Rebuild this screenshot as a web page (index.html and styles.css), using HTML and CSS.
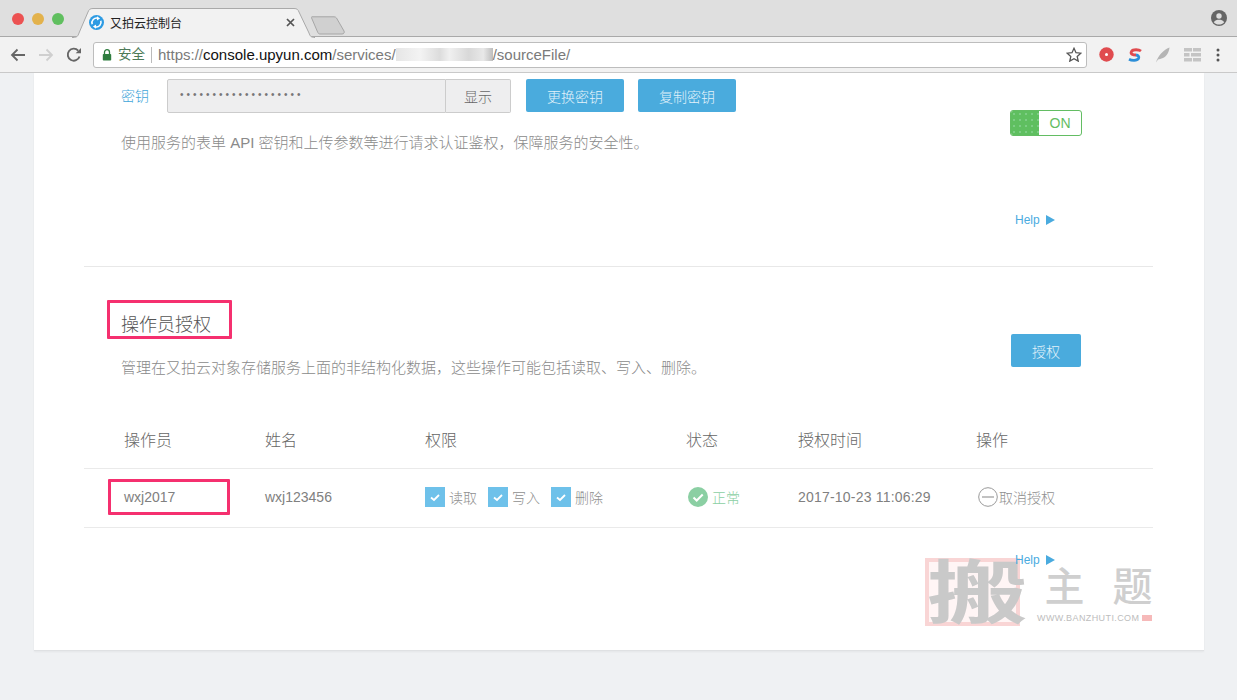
FILE: index.html
```html
<!DOCTYPE html>
<html lang="zh">
<head>
<meta charset="utf-8">
<title>又拍云控制台</title>
<link rel="stylesheet" href="styles.css">
</head>
<body>
<header class="browser">
  <div class="tabbar">
    <div class="lights"><i class="light red"></i><i class="light amber"></i><i class="light green"></i></div>
    <div class="tab">
      <svg class="tab-shape" width="244" height="30" viewBox="0 0 244 30"><path d="M0 29.5H1C5 29.5 6 28 7 25L16 4C17 1.500 18 .5 21 .5H222C225 .5 226 1.500 227 4L237 25C238 28 239 29.500 243 29.500" fill="#f2f2f2" stroke="#a9a9a9"/></svg>
      <svg class="favicon" width="15" height="15" viewBox="0 0 16 16"><circle cx="8" cy="8" r="8" fill="#2d9be3"/><path d="M3.400 9.800A5 5 0 0 1 9.500 3.400M12.600 6.200A5 5 0 0 1 6.500 12.600" fill="none" stroke="#fff" stroke-width="1.700"/><path d="M8.500 1.300l3.300 2.500-3.300 2zM7.500 14.700l-3.300-2.500 3.300-2z" fill="#fff"/></svg>
      <span class="tab-title">又拍云控制台</span>
      <svg class="tab-close" width="9" height="9" viewBox="0 0 9 9"><path d="M1 1l7 7M8 1L1 8" stroke="#555" stroke-width="1.700"/></svg>
    </div>
    <svg class="newtab" width="34" height="19" viewBox="0 0 34 19"><path d="M1 .8H23C24 .8 25 1.200 25.500 2L33 15C33.700 16.500 33 18 31 18H9C8 18 7.300 17.500 6.800 16.500L.6 2C.2 1.200.4.800 1 .8Z" fill="#d0d0d0" stroke="#a6a6a6"/></svg>
    <svg class="profile" width="16" height="16" viewBox="0 0 16 16"><circle cx="8" cy="8" r="8" fill="#666"/><circle cx="8" cy="6" r="2.700" fill="#dfdfdf"/><path d="M2.800 12.200C4 10 6 9.700 8 9.700s4 .3 5.200 2.500C12 13.800 10 14.500 8 14.500s-4-.7-5.200-2.300Z" fill="#dfdfdf"/></svg>
  </div>
  <div class="toolbar">
    <svg class="nav-icon" width="16" height="14" viewBox="0 0 16 14"><path d="M15 7H2M7.500 1.500L2 7l5.500 5.500" fill="none" stroke="#666" stroke-width="1.800"/></svg>
    <svg class="nav-icon" width="16" height="14" viewBox="0 0 16 14"><path d="M1 7h13M8.500 1.500L14 7l-5.500 5.500" fill="none" stroke="#cfcfcf" stroke-width="1.800"/></svg>
    <svg class="nav-icon" width="16" height="16" viewBox="0 0 16 16"><path d="M13.500 9.500A6 6 0 1 1 12.200 3.600" fill="none" stroke="#666" stroke-width="1.900"/><path d="M9.700 6.200H15V1z" fill="#666"/></svg>
    <div class="omnibox">
      <svg class="lock" width="10" height="12" viewBox="0 0 10 12"><path d="M2.500 5V3.200a2.500 2.500 0 0 1 5 0V5" fill="none" stroke="#2f7d3f" stroke-width="1.300"/><rect x=".8" y="5" width="8.400" height="6.600" rx=".8" fill="#2f7d3f"/></svg>
      <span class="secure">安全</span>
      <span class="url"><span class="url-dim">https://</span><span class="url-host">console.upyun.com</span><span class="url-dim">/services/</span><span class="url-blur"></span><span class="url-dim">/sourceFile/</span></span>
      <svg class="star" width="16" height="15" viewBox="0 0 16 15"><path d="M8 1.300l2 4.400 4.800.5-3.600 3.200 1 4.700L8 11.700l-4.200 2.400 1-4.700L1.200 6.200 6 5.700z" fill="none" stroke="#555" stroke-width="1.300"/></svg>
    </div>
    <div class="extensions">
      <svg width="15" height="15" viewBox="0 0 15 15"><circle cx="7.500" cy="7.500" r="7.200" fill="#e04b4f"/><circle cx="7.500" cy="7.500" r="1.500" fill="#fff"/></svg>
      <svg width="14" height="14" viewBox="0 0 14 14"><path d="M13 3C11 1.500 5 1 3.500 3.500 2 6 5 7 8 7" fill="none" stroke="#e04b4f" stroke-width="2.800"/><path d="M8 7c2 .3 3.500 1.500 2.500 3.500-1.500 2.500-7 2-9.500 .7" fill="none" stroke="#2d8fd8" stroke-width="2.800"/></svg>
      <svg width="15" height="16" viewBox="0 0 15 16"><path d="M1 15.500C3 9 8 3 14.500.5 14 5 12 9 8 11 6 12 4 12 3 12.500Z" fill="#b5b5b5"/></svg>
      <svg width="17" height="14" viewBox="0 0 17 14"><path d="M0 0h8v3.500H0zM9 0h8v3.500H9zM0 5h5.500v3.500H0zM7 5h10v3.500H7zM0 10h8v3.500H0zM9 10h8v3.500H9z" fill="#c4c4c4"/></svg>
      <svg class="menu-dots" width="4" height="14" viewBox="0 0 4 14"><circle cx="2" cy="2" r="1.500" fill="#555"/><circle cx="2" cy="7" r="1.500" fill="#555"/><circle cx="2" cy="12" r="1.500" fill="#555"/></svg>
    </div>
  </div>
</header>

<main class="page">
  <div class="card">
    <section class="section section-key">
      <div class="section-main">
        <div class="key-row">
          <span class="key-label">密钥</span>
          <div class="key-field">
            <span class="key-input">•••••••••••••••••••</span>
            <button class="key-show">显示</button>
          </div>
          <button class="btn btn-key">更换密钥</button>
          <button class="btn btn-key">复制密钥</button>
        </div>
        <p class="desc desc-key">使用服务的表单 API 密钥和上传参数等进行请求认证鉴权，保障服务的安全性。</p>
      </div>
      <aside class="section-side">
        <div class="toggle"><span class="toggle-on"></span><span class="toggle-label">ON</span></div>
        <a class="help help-key">Help <i class="tri"></i></a>
      </aside>
    </section>

    <section class="section-auth">
      <div class="auth-head">
        <div>
          <h2 class="title">操作员授权</h2>
          <p class="desc">管理在又拍云对象存储服务上面的非结构化数据，这些操作可能包括读取、写入、删除。</p>
        </div>
        <button class="btn btn-grant">授权</button>
        <span class="mark mark-title"></span>
      </div>
      <div class="table">
        <div class="table-row table-header">
          <span>操作员</span><span>姓名</span><span>权限</span><span>状态</span><span>授权时间</span><span>操作</span>
        </div>
        <div class="table-row table-body">
          <span class="cell-text">wxj2017</span>
          <span class="cell-text">wxj123456</span>
          <span class="perms">
            <span class="perm"><svg class="check" width="20" height="20" viewBox="0 0 20 20"><rect width="20" height="20" fill="#6ec1ea"/><path d="M6 10.500l3 2.500 5-5" fill="none" stroke="#fff" stroke-width="1.800"/></svg>读取</span>
            <span class="perm"><svg class="check" width="20" height="20" viewBox="0 0 20 20"><rect width="20" height="20" fill="#6ec1ea"/><path d="M6 10.500l3 2.500 5-5" fill="none" stroke="#fff" stroke-width="1.800"/></svg>写入</span>
            <span class="perm"><svg class="check" width="20" height="20" viewBox="0 0 20 20"><rect width="20" height="20" fill="#6ec1ea"/><path d="M6 10.500l3 2.500 5-5" fill="none" stroke="#fff" stroke-width="1.800"/></svg>删除</span>
          </span>
          <span class="status"><svg width="20" height="20" viewBox="0 0 20 20"><circle cx="10" cy="10" r="10" fill="#8bcfa3"/><path d="M5.500 10.500l3.200 3 6-6" fill="none" stroke="#fff" stroke-width="2"/></svg>正常</span>
          <span class="cell-text cell-date">2017-10-23 11:06:29</span>
          <span class="revoke"><svg width="20" height="20" viewBox="0 0 20 20"><circle cx="10" cy="10" r="9.300" fill="none" stroke="#999" stroke-width="1"/><path d="M4 10h12" stroke="#999" stroke-width="1.200"/></svg>取消授权</span>
          <span class="mark mark-name"></span>
        </div>
      </div>
      <a class="help help-auth">Help <i class="tri"></i></a>
      <div class="watermark">
        <span class="wm-seal"><span class="wm-glyph">搬</span></span>
        <span class="wm-side"><span class="wm-name">主题</span><span class="wm-url">WWW.BANZHUTI.COM <i class="wm-dot"></i></span></span>
      </div>
    </section>
  </div>
</main>
</body>
</html>
```

FILE: styles.css
```css
* { box-sizing: border-box; }
html, body { margin: 0; height: 700px; overflow: hidden; }
body {
  background: #eff1f3;
  font-family: "Liberation Sans", "Noto Sans CJK SC", sans-serif;
  color: #777;
}
p, h2 { margin: 0; }
button { font: inherit; cursor: pointer; }

/* browser chrome */
.browser { height: 73px; }
.tabbar {
  height: 37px;
  background: #dfdfdf;
  border-bottom: 1px solid #a9a9a9;
  display: flex;
  align-items: flex-start;
  padding: 0 10px 0 12px;
}
.lights { display: flex; gap: 8px; margin-top: 13px; width: 60px; }
.light { width: 12px; height: 12px; border-radius: 50%; }
.red { background: #ec5252; }
.amber { background: #e3b24c; }
.green { background: #60bf5f; }
.tab {
  position: relative;
  width: 244px;
  height: 37px;
  margin-top: 8px;
  flex: none;
  display: flex;
  align-items: center;
  padding: 0 21px 9px 17px;
}
.tab-shape { position: absolute; left: 0; top: 0; }
.favicon { position: relative; flex: none; }
.tab-title { position: relative; margin-left: 6px; font-size: 12px; color: #222; flex: 1; }
.tab-close { position: relative; flex: none; }
.newtab { margin: 16px 0 0 -5px; flex: none; }
.profile { margin: 10px 0 0 auto; flex: none; }

.toolbar {
  height: 36px;
  background: #f2f2f2;
  border-bottom: 1px solid #c9c9c9;
  display: flex;
  align-items: center;
  padding: 0 10px;
}
.nav-icon { flex: none; margin-right: 12px; }
.omnibox {
  width: 994px;
  height: 26px;
  margin-left: -1px;
  background: #fff;
  border: 1px solid #bdbdbd;
  border-radius: 3px;
  display: flex;
  align-items: center;
  padding: 0 4px 0 8px;
  flex: none;
}
.lock { flex: none; }
.secure {
  margin-left: 6px;
  padding-right: 6px;
  font-size: 13.500px;
  color: #4d7a57;
  border-right: 1px solid #bbb;
  line-height: 16px;
}
.url { margin-left: 6px; font-size: 15px; display: flex; align-items: center; flex: 1; }
.url-dim { color: #7a7a7a; }
.url-host { color: #111; }
.url-blur {
  width: 97px;
  height: 13px;
  background: linear-gradient(90deg, #e6e6e6, #f3f3f3 25%, #dcdcdc 45%, #f0f0f0 55%, #d8d8d8 75%, #e8e8e8 90%, #bdbdbd);
}
.star { flex: none; }
.extensions {
  display: flex;
  align-items: center;
  margin-left: 12px;
  gap: 13.500px;
}
.menu-dots { margin-left: 2px; }

/* card */
.page { padding: 0 33px 0 34px; height: 627px; }
.card {
  background: #fff;
  height: 578px;
  border-bottom: 1px solid #dfe1e3;
  box-shadow: 0 1px 2px rgba(0,0,0,.05);
  padding: 0 51px 0 50px;
  position: relative;
}
.section { display: flex; justify-content: space-between; }
.section-key {
  height: 194px;
  border-bottom: 1px solid #e8e8e8;
  padding: 6px 71px 0 37px;
}
.key-row { display: flex; align-items: flex-start; }
.key-label { width: 46px; font-size: 14px; font-weight: 300; color: #3fa6da; line-height: 34px; }
.key-field { display: flex; width: 344px; height: 34px; }
.key-input {
  width: 279px;
  background: #eeeeef;
  border: 1px solid #ccc;
  border-radius: 2px 0 0 2px;
  padding-left: 12px;
  font-size: 10px;
  letter-spacing: 3px;
  line-height: 30px;
  color: #777;
}
.key-show {
  width: 65px;
  background: #eeeeef;
  border: 1px solid #ccc;
  border-left: 0;
  border-radius: 0 2px 2px 0;
  font-size: 14px;
  font-weight: 300;
  color: #666;
  padding: 0;
}
.btn {
  background: #4aabdd;
  border: 0;
  border-radius: 2px;
  color: #e2f2fa;
  font-size: 14px;
  font-weight: 300;
  padding: 0;
}
.btn-key { width: 98px; height: 33px; margin-left: 14px; }
.btn-key:first-of-type { margin-left: 15px; }
.desc { font-size: 15px; font-weight: 300; line-height: 20px; color: #8a8a8a; }
.desc-key { margin-top: 20px; }
.section-side { display: flex; flex-direction: column; align-items: flex-start; width: 72px; padding-top: 31px; }
.toggle {
  width: 72px;
  height: 26px;
  display: flex;
  border: 1px solid #63bd63;
  border-radius: 3px;
  background: #fff;
  overflow: hidden;
}
.toggle-on {
  width: 28px;
  background-color: #5fbf60;
  background-image: radial-gradient(#9fdcae 0.6px, transparent 0.8px);
  background-size: 6px 6px;
}
.toggle-label { flex: 1; text-align: center; font-size: 14px; line-height: 24px; color: #63bd63; }
.help {
  display: flex;
  align-items: center;
  gap: 6px;
  font-size: 12px;
  line-height: 16px;
  color: #4aabdf;
  width: max-content;
}
.help-key { margin: 76px 0 0 5px; }
.tri {
  width: 0;
  height: 0;
  border-left: 9px solid #4aabdf;
  border-top: 5px solid transparent;
  border-bottom: 5px solid transparent;
}

/* operator section */
.section-auth { position: relative; padding-top: 45px; }
.auth-head {
  position: relative;
  display: flex;
  justify-content: space-between;
  align-items: flex-start;
  padding: 0 72px 0 37px;
  height: 99px;
}
.title { font-size: 18px; font-weight: 300; line-height: 26px; color: #555; margin-bottom: 20px; }
.btn-grant { width: 70px; height: 33px; margin-top: 22px; }
.mark { position: absolute; border: 3px solid #f5306f; border-radius: 1px; pointer-events: none; }
.mark-title { left: 23px; top: -12px; width: 125px; height: 39px; }
.mark-name { left: 24px; top: 10px; width: 122px; height: 36px; }
.table-row {
  position: relative;
  display: grid;
  grid-template-columns: 141px 160px 261px 112px 178px 1fr;
  padding-left: 40px;
  align-items: center;
  border-bottom: 1px solid #eaeaea;
}
.table-header { height: 58px; padding-bottom: 2px; font-size: 16px; font-weight: 300; color: #666; }
.table-body { height: 59px; padding-bottom: 2px; }
.cell-text { font-size: 14px; color: #808080; }
.cell-date { letter-spacing: .2px; }
.perms { display: flex; gap: 11px; }
.perm { display: flex; align-items: center; gap: 4px; color: #8f8f8f; font-size: 14px; font-weight: 300; }
.status { display: flex; align-items: center; gap: 4px; margin-left: 2px; color: #8bcfa3; font-size: 14px; font-weight: 300; }
.revoke { display: flex; align-items: center; gap: 1px; margin-left: 2px; color: #8f8f8f; font-size: 14px; font-weight: 300; }
.help-auth { margin: 24px 0 0 931px; position: relative; z-index: 1; }

/* watermark */
.watermark {
  position: absolute;
  left: 841px;
  top: 291px;
  display: flex;
  align-items: flex-start;
}
.wm-seal {
  width: 95px;
  height: 68px;
  border: 4px solid #f9d5d5;
  background: #fff5f5;
  display: block;
  margin-right: 17px;
  white-space: nowrap;
}
.wm-glyph {
  display: block;
  font-size: 84px;
  line-height: 60px;
  font-weight: 700;
  color: #c9c9c9;
  transform: translate(-2px, 2px) scale(1.2, .82);
  transform-origin: 0 50%;
}
.wm-side { display: flex; flex-direction: column; align-items: flex-end; padding-top: 7px; }
.wm-name { font-size: 40px; line-height: 44px; font-weight: 500; letter-spacing: 28px; margin-right: -28px; color: #cfcfcf; }
.wm-url { margin-top: 4px; font-size: 9px; letter-spacing: .4px; color: #bdbdbd; display: flex; align-items: center; gap: 3px; white-space: nowrap; }
.wm-dot { width: 10px; height: 6px; background: #f6b9b9; }
```
